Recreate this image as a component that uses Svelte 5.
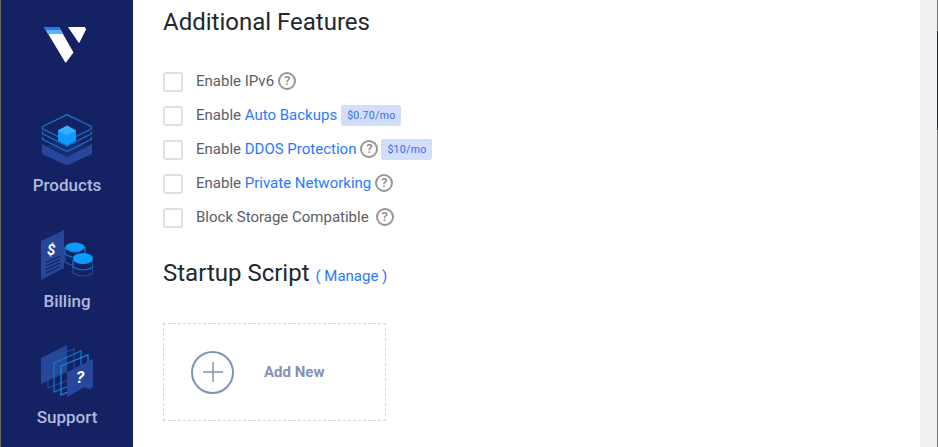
<script lang="ts">
	const options = [
		{ before: 'Enable IPv6', link: '', help: true, price: '' },
		{ before: 'Enable ', link: 'Auto Backups', help: false, price: '$0.70/mo' },
		{ before: 'Enable ', link: 'DDOS Protection', help: true, price: '$10/mo' },
		{ before: 'Enable ', link: 'Private Networking', help: true, price: '' },
		{ before: 'Block Storage Compatible', link: '', help: true, price: '' }
	];
</script>

<div class="page">
	<div class="edge-left"></div>
	<nav class="sidebar">
		<svg class="logo" viewBox="0 0 44 36" width="44" height="36">
			<path d="M0 0H15L29.5 25.5L22 35.5Q21.500 36 21 35Z" fill="#fff" />
			<path d="M2 3.500H17L19 7H4Z" fill="#51b9ff" />
			<path d="M0 0H15L17 3.500H2Z" fill="#1e7bf5" />
			<path d="M24 0H41L42 2.500L35.500 15.500Q35 16 34.500 15.500Z" fill="#fff" />
		</svg>

		<div class="nav-item products">
			<svg viewBox="0 0 50 52" width="50" height="52">
				<path d="M0 30V40L25 51.500L50 40V30L25 43Z" fill="#27479a" />
				<path d="M5 32L25 43L45 32L25 22Z" fill="#1a2c74" />
				<g fill="none" stroke="#1679c9" stroke-width="1.300" stroke-linejoin="round">
					<path d="M25 .7L49.300 12.500Q50 14 49 15L25 27L1 15Q0 14 .7 12.500Z" />
					<path d="M.7 17.500Q0 19 1 20L25 32L49 20Q50 19 49.300 17.500" />
					<path d="M.7 23Q0 24.500 1 25.500L25 37.500L49 25.500Q50 24.500 49.300 23" />
				</g>
				<path d="M25 11.500L34 16.500V26.500L25 31.500L16 26.500V16.500Z" fill="#0d9bff" />
				<path d="M25 11.500L34 16.500L25 21.500L16 16.500Z" fill="#35b2ff" />
			</svg>
			<span>Products</span>
		</div>

		<div class="nav-item billing">
			<svg viewBox="0 0 52 52" width="52" height="52">
				<path d="M0 11L23 0V38L0 50Z" fill="#27479a" />
				<text x="6" y="25" class="mark" font-size="15">$</text>
				<g stroke="#16215f" stroke-width="1.200">
					<path d="M5 32.500L19 26" />
					<path d="M5 36L19 29.500" />
					<path d="M5 39.500L19 33" />
					<path d="M5 43L19 36.500" />
				</g>
				<g fill="none" stroke="#1f5aa8" stroke-width="1.200">
					<path d="M24 24V32Q34 39 44 32" />
				</g>
				<ellipse cx="34" cy="18" rx="10" ry="5.500" fill="#0a9dff" />
				<path d="M24 18V24Q34 31 44 24V18Q34 26 24 18Z" fill="#16215f" stroke="#1679c9" stroke-width="1.200" />
				<g fill="none" stroke="#1f4f9a" stroke-width="1.200">
					<path d="M32 36V43Q42 49 52 43V36" />
				</g>
				<path d="M32 30V37Q42 43 52 37V30" fill="#16215f" stroke="#1679c9" stroke-width="1.200" />
				<ellipse cx="42" cy="28.500" rx="10" ry="5.500" fill="#0a9dff" />
			</svg>
			<span>Billing</span>
		</div>

		<div class="nav-item support">
			<svg viewBox="0 0 52 52" width="52" height="52">
				<path d="M0 13L26 0V27L0 39Z" fill="#27479a" />
				<path d="M7 14L33 4V33L7 43Z" fill="none" stroke="#1f4f9a" stroke-width="1.200" />
				<path d="M13 18L40 6V36L13 47Z" fill="none" stroke="#1478c8" stroke-width="1.200" />
				<path d="M20 21L47 10V38L20 50Z" fill="none" stroke="#1a8be0" stroke-width="1.200" />
				<path d="M26 27L52 14V42L48 44.500L44 42L26 52Z" fill="#27479a" />
				<text x="35" y="38" class="mark" font-size="17">?</text>
			</svg>
			<span>Support</span>
		</div>
	</nav>

	<main>
		<h2 class="first">Additional Features</h2>
		<ul>
			{#each options as opt}
				<li>
					<span class="check"></span>
					<span class="label">{opt.before}{#if opt.link}<a href="#top">{opt.link}</a>{/if}</span>
					{#if opt.help}<span class="help">?</span>{/if}
					{#if opt.price}<span class="price">{opt.price}</span>{/if}
				</li>
			{/each}
		</ul>

		<h2 class="startup">Startup Script <a href="#top">( Manage )</a></h2>

		<div class="add-new">
			<span class="plus">
				<svg viewBox="0 0 20 20" width="20" height="20">
					<path d="M10 0V20M0 10H20" stroke="#8492b4" stroke-width="1.500" />
				</svg>
			</span>
			<strong>Add New</strong>
		</div>
	</main>

	<div class="scrollbar"></div>
	<div class="edge-right"></div>
</div>

<style>
	:global(body) {
		margin: 0;
		background: #fff;
		font-family: Roboto, 'Liberation Sans', sans-serif;
	}

	.page {
		display: flex;
		height: 447px;
		overflow: hidden;
	}

	.edge-left {
		width: 1px;
		background: #6a6a6a;
	}

	.sidebar {
		width: 132px;
		background: #142163;
		display: flex;
		flex-direction: column;
		align-items: center;
	}

	.logo {
		margin: 27px 2px 0 0;
	}

	.nav-item {
		display: flex;
		flex-direction: column;
		align-items: center;
		color: #b0b8df;
		font-size: 17px;
		font-weight: 500;
	}

	.nav-item svg {
		display: block;
	}

	.nav-item span {
		line-height: 20px;
	}

	.products {
		margin-top: 51px;
	}

	.products span {
		margin-top: 9px;
	}

	.billing {
		margin-top: 35px;
	}

	.billing span {
		margin-top: 9px;
	}

	.support {
		margin-top: 34px;
	}

	.support span {
		margin-top: 10px;
	}

	.mark {
		fill: #fff;
		font-family: Roboto, sans-serif;
		font-weight: 700;
		font-style: italic;
	}

	main {
		flex: 1;
		padding: 8px 0 0 30px;
		color: #5a5e66;
	}

	h2 {
		margin: 0;
		font-size: 24px;
		font-weight: 400;
		line-height: 28px;
		color: #23272e;
	}

	ul {
		list-style: none;
		margin: 36px 0 0;
		padding: 0;
		display: flex;
		flex-direction: column;
		gap: 14px;
	}

	li {
		display: flex;
		align-items: center;
		height: 20px;
		font-size: 15px;
	}

	.check {
		width: 16px;
		height: 16px;
		border: 2px solid #e0e0e0;
		border-radius: 3px;
		margin-right: 13px;
	}

	a {
		color: #2979ff;
		text-decoration: none;
	}

	.label {
		position: relative;
		top: -1px;
		white-space: pre;
	}

	.help {
		width: 14px;
		height: 14px;
		margin-left: 4px;
		border: 2px solid #969696;
		border-radius: 50%;
		color: #8a8a8a;
		font-size: 13px;
		font-weight: 500;
		line-height: 14px;
		text-align: center;
		position: relative;
		top: -1px;
	}

	li:last-child .help {
		margin-left: 7px;
	}

	.price {
		margin-left: 3px;
		padding: 0 6px;
		height: 21px;
		line-height: 21px;
		background: #d3defa;
		border-radius: 2px;
		color: #2f6cf0;
		font-size: 10.500px;
		letter-spacing: 0.3px;
		position: relative;
		top: -1px;
	}

	li:nth-child(2) .price {
		margin-left: 4px;
	}

	.startup {
		margin-top: 31px;
	}

	.startup a {
		font-size: 15px;
	}

	.add-new {
		margin-top: 33px;
		height: 96px;
		border: 1px dashed #d8d8d8;
		display: flex;
		align-items: center;
		padding-left: 27px;
		width: 194px;
	}

	.plus {
		width: 39px;
		height: 39px;
		border: 2px solid #8492b4;
		border-radius: 50%;
		display: flex;
		align-items: center;
		justify-content: center;
	}

	.add-new strong {
		margin-left: 30px;
		font-size: 15px;
		font-weight: 700;
		color: #8492b4;
	}

	.scrollbar {
		width: 17px;
		background: #f1f1f1;
	}

	.edge-right {
		width: 1px;
		background: linear-gradient(#777 31px, #20243f 31px, #20243f 130px, #777 130px);
	}
</style>
